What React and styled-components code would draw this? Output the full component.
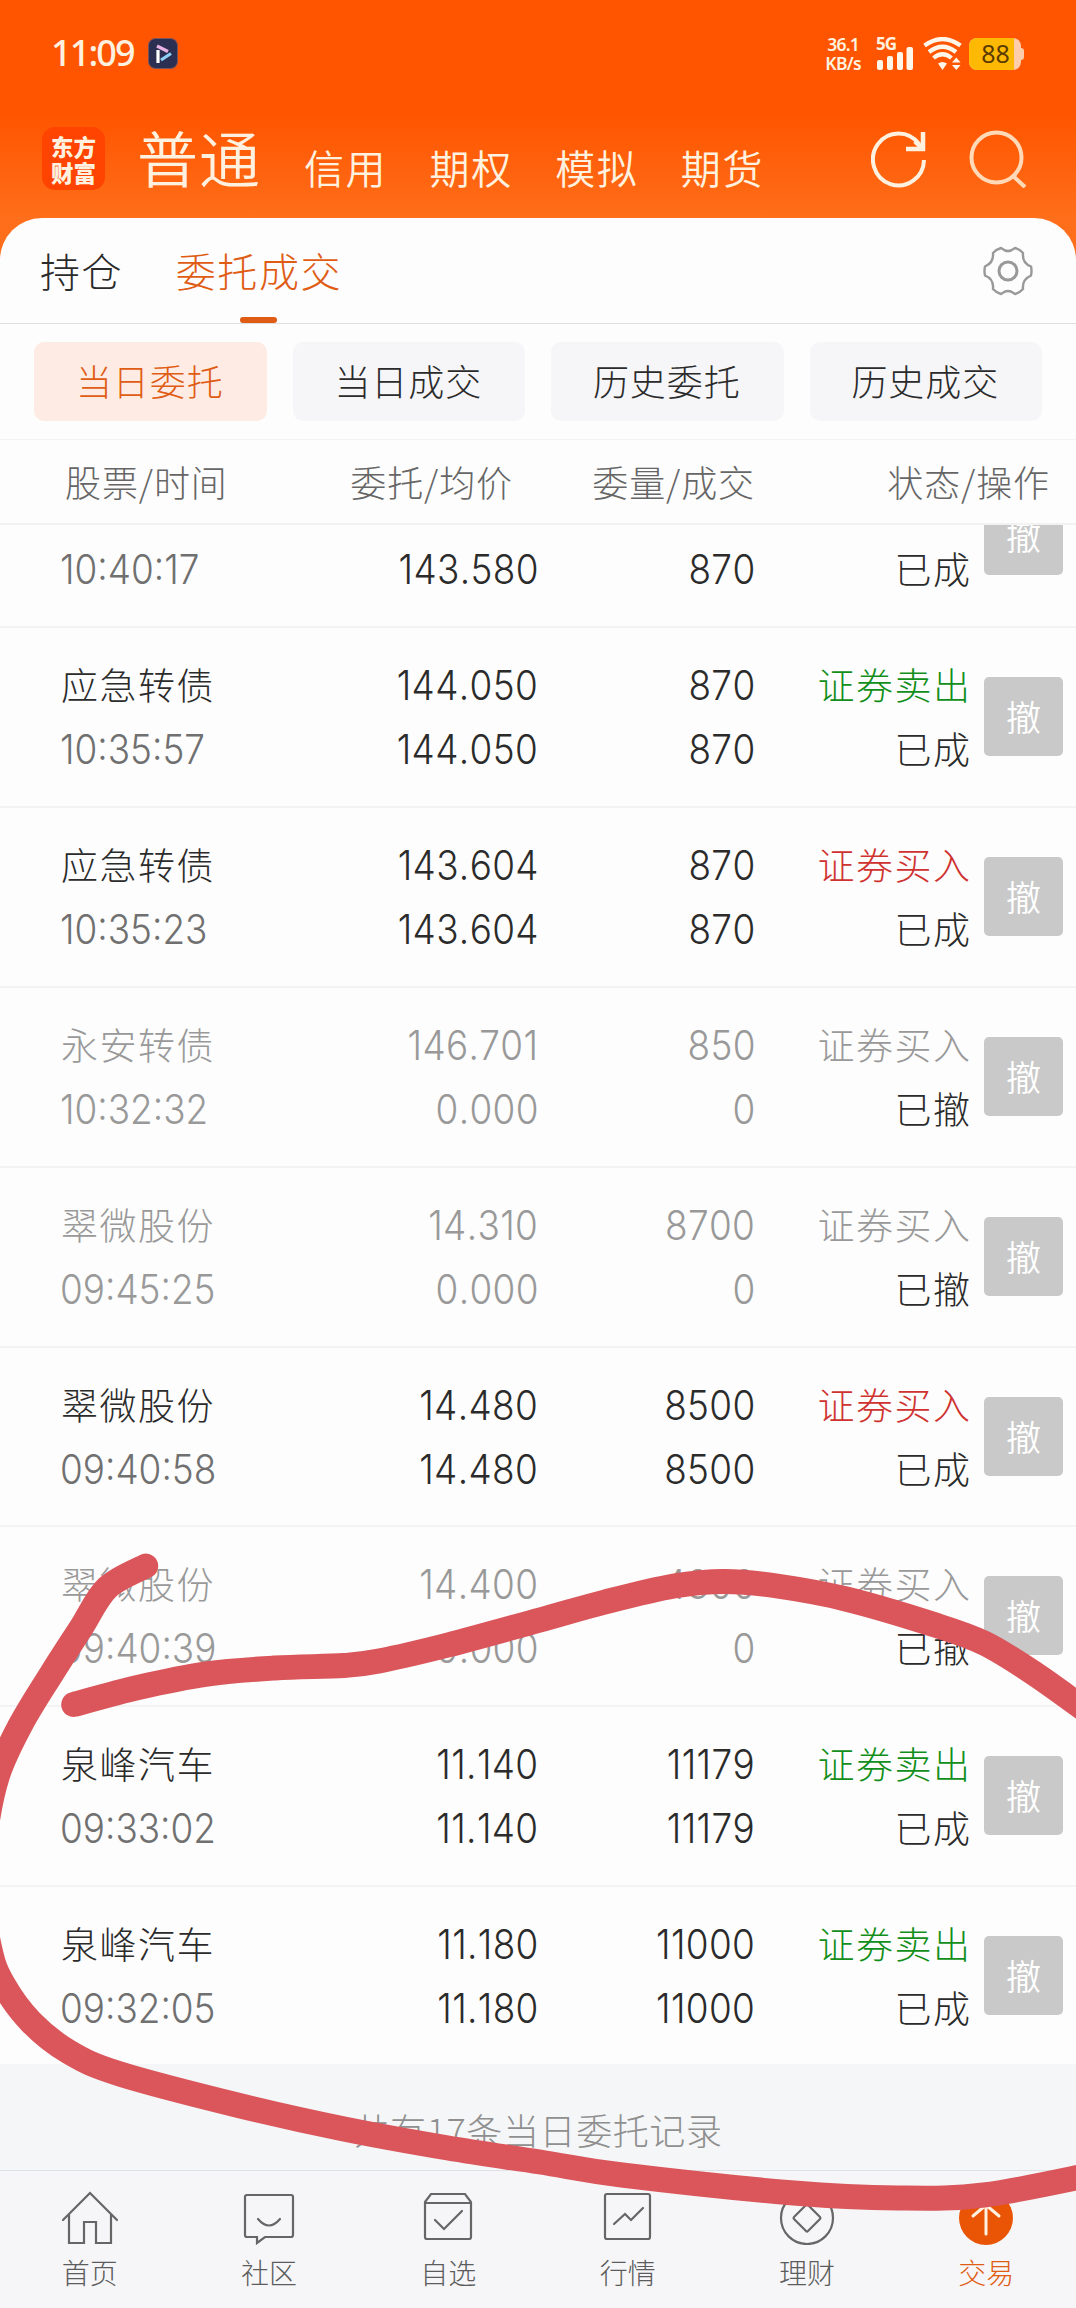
import styled, { createGlobalStyle } from 'styled-components';

// the first order is scrolled half way under the table head
const orders = [
  { time: '10:40:17', avg: '143.580', done: '870', partial: true },
  { name: '应急转债', time: '10:35:57', price: '144.050', avg: '144.050', qty: '870', done: '870', side: 'sell' },
  { name: '应急转债', time: '10:35:23', price: '143.604', avg: '143.604', qty: '870', done: '870', side: 'buy' },
  { name: '永安转债', time: '10:32:32', price: '146.701', avg: '0.000', qty: '850', done: '0', side: 'buy', off: true },
  { name: '翠微股份', time: '09:45:25', price: '14.310', avg: '0.000', qty: '8700', done: '0', side: 'buy', off: true },
  { name: '翠微股份', time: '09:40:58', price: '14.480', avg: '14.480', qty: '8500', done: '8500', side: 'buy' },
  { name: '翠微股份', time: '09:40:39', price: '14.400', avg: '0.000', qty: '4300', done: '0', side: 'buy', off: true },
  { name: '泉峰汽车', time: '09:33:02', price: '11.140', avg: '11.140', qty: '11179', done: '11179', side: 'sell' },
  { name: '泉峰汽车', time: '09:32:05', price: '11.180', avg: '11.180', qty: '11000', done: '11000', side: 'sell' },
];

const sides = { buy: '证券买入', sell: '证券卖出' };
const accounts = ['信用', '期权', '模拟', '期货'];
const filters = ['当日委托', '当日成交', '历史委托', '历史成交'];

// hand drawn marker strokes
const loopStroke = [
  [145.7, 1566], [107, 1588], [81, 1628], [52, 1673], [21, 1724], [-2, 1774], [-14, 1830],
  [-18, 1890], [-10, 1950], [3, 1984], [31, 2022], [69, 2052], [120, 2074], [241, 2106],
  [344, 2129], [448, 2148], [540, 2162], [622, 2175], [794, 2193], [898, 2198], [984, 2195], [1095, 2174],
];
const topStroke = [
  [73.7, 1704.5], [138, 1687.5], [207, 1674], [275, 1668], [344, 1665.5], [379, 1661], [448, 1645],
  [540, 1620], [605, 1602], [674, 1586], [725, 1581.500], [777, 1586], [846, 1599], [932, 1624],
  [984, 1643], [1035, 1674], [1095, 1717],
];

const smooth = (pts) => {
  let d = `M${pts[0]}`;
  for (let i = 0; i < pts.length - 1; i++) {
    const a = pts[i - 1] || pts[i];
    const b = pts[i];
    const c = pts[i + 1];
    const e = pts[i + 2] || c;
    d += `C${b[0] + (c[0] - a[0]) / 6} ${b[1] + (c[1] - a[1]) / 6} ${c[0] - (e[0] - b[0]) / 6} ${c[1] - (e[1] - b[1]) / 6} ${c[0]} ${c[1]}`;
  }
  return d;
};

function StatusBar() {
  return (
    <Status>
      <Clock>11:09</Clock>
      <svg width="30" height="31" viewBox="0 0 30 31">
        <rect x="0.5" y="0.5" width="29" height="30" rx="7" fill="#2b2f52" stroke="#7a5560" />
        <g fill="none" strokeWidth="3.2">
          <path d="M10 12v13" stroke="#fff" />
          <path d="M9 8l11 5.500" stroke="#e9b3e4" />
          <path d="M13 22l10-6.500" stroke="#8fd0f7" />
        </g>
      </svg>
      <Speed>
        <span>36.1</span>
        <span>KB/s</span>
      </Speed>
      <Signal>
        <b>5G</b>
        <svg width="38" height="23" viewBox="0 0 38 23" fill="#fff6ea">
          <rect x="1" y="13" width="6" height="10" rx="2" />
          <rect x="11" y="9" width="6" height="14" rx="2" />
          <rect x="21" y="5" width="6" height="18" rx="2" />
          <rect x="30.500" y="0" width="6.500" height="23" rx="2" />
        </svg>
      </Signal>
      <svg width="40" height="34" viewBox="0 0 40 34">
        <g fill="none" stroke="#fff6ea" strokeWidth="4.2">
          <path d="M1.500 8.500Q19.500-4.500 37.500 8.500" />
          <path d="M6 15Q19.500 4.500 33 15" />
          <path d="M10.500 21Q19.500 13.500 28.500 21" />
        </g>
        <path d="M15 26.500q4.500-3 9 0L19.500 33z" fill="#fff6ea" />
        <path d="M29 25.500l4.300-5 4.300 5zM29 28l4.300 5 4.300-5z" fill="#fff6ea" />
      </svg>
      <Battery>
        <Level>88</Level>
      </Battery>
    </Status>
  );
}

function Header() {
  return (
    <TopBar>
      <Logo>
        <span>东方</span>
        <span>财富</span>
      </Logo>
      <Current>普通</Current>
      <Accounts>
        {accounts.map((a) => (
          <span key={a}>{a}</span>
        ))}
      </Accounts>
      <Tools>
        <svg width="56" height="58" viewBox="0 0 56 58" fill="none" stroke="#fff1df" strokeWidth="4">
          <path d="M53 30A25.500 26 0 1 1 48 14" />
          <path d="M52 2v17H35" strokeWidth="4.500" />
          <path d="M44 11l7 7" strokeWidth="5" />
        </svg>
        <svg width="58" height="58" viewBox="0 0 58 58" fill="none" stroke="#ffd9b8" strokeWidth="4">
          <circle cx="27.500" cy="27.500" r="25" />
          <path d="M43 45l13 12" />
        </svg>
      </Tools>
    </TopBar>
  );
}

function Order({ order }) {
  const { off, side, partial } = order;
  return (
    <Row $partial={partial}>
      <Cell>
        {!partial && <Line $tone={off && 'off'}>{order.name}</Line>}
        <Time $tone={off ? 'off' : 'time'}>{order.time}</Time>
      </Cell>
      <Cell $end>
        {!partial && <Num $tone={off && 'off'}>{order.price}</Num>}
        <Num $tone={off && 'off'}>{order.avg}</Num>
      </Cell>
      <Cell $end>
        {!partial && <Num $tone={off && 'off'}>{order.qty}</Num>}
        <Num $tone={off && 'off'}>{order.done}</Num>
      </Cell>
      <Cell $end>
        {!partial && <Line $tone={off ? 'off' : side}>{sides[side]}</Line>}
        <Line>{off ? '已撤' : '已成'}</Line>
      </Cell>
      <Cancel $partial={partial}>撤</Cancel>
    </Row>
  );
}

function BottomNav() {
  return (
    <Nav>
      <NavItem>
        <svg width="56" height="54" viewBox="0 0 56 54">
          <path d="M1 29L28 2l27 27M7 23v29h15V31h12v21h15V23" />
        </svg>
        首页
      </NavItem>
      <NavItem>
        <svg width="56" height="54" viewBox="0 0 56 54">
          <path d="M6 4h44q2 0 2 2v38q0 2-2 2H24l-8 6v-6H6q-2 0-2-2V6q0-2 2-2zM17 28q11 13 22 0" />
        </svg>
        社区
      </NavItem>
      <NavItem>
        <svg width="56" height="54" viewBox="0 0 56 54">
          <path d="M5 11l6-8h34l6 8v35q0 2-2 2H7q-2 0-2-2zM5 12h46M15 29l9 9 18-18" />
        </svg>
        自选
      </NavItem>
      <NavItem>
        <svg width="56" height="54" viewBox="0 0 56 54">
          <rect x="5" y="3" width="45" height="45" rx="2" />
          <path d="M14 33l11-10 6 6 12-12" />
        </svg>
        行情
      </NavItem>
      <NavItem>
        <svg width="56" height="54" viewBox="0 0 56 54">
          <circle cx="28" cy="27" r="26" />
          <path d="M27 14q1-1 2 0l12 12q1 1 0 2L29 40q-1 1-2 0L15 28q-1-1 0-2z" />
        </svg>
        理财
      </NavItem>
      <NavItem $active>
        <svg width="56" height="54" viewBox="0 0 56 54">
          <circle cx="28" cy="27" r="27" fill="#e95504" stroke="none" />
          <path d="M28 43V16M15 25l13-11 13 11" stroke="#fff1df" strokeWidth="3" />
        </svg>
        交易
      </NavItem>
    </Nav>
  );
}

function App() {
  return (
    <Screen>
      <Global />
      <StatusBar />
      <Header />
      <Sheet>
        <Tabs>
          <Tab>持仓</Tab>
          <Tab $active>委托成交</Tab>
          <svg width="50" height="50" viewBox="0 0 50 50" fill="none" stroke="#999" strokeWidth="2.4">
            <path d="M18 2l4 2.500q3 1 6 0L32 2q5 1.500 8 5-1 10 8 13.500 1 4.500 0 9-9 4-8 13.500-3 3.500-8 5l-4-2.500q-3-1-6 0L18 48q-5-1.500-8-5 1-10-8-13.500-1-4.500 0-9 9-4 8-13.500 3-3.500 8-5z" />
            <circle cx="25" cy="25" r="9" strokeWidth="3" />
          </svg>
        </Tabs>
        <Filters>
          {filters.map((f, i) => (
            <Chip key={f} $active={i === 0}>{f}</Chip>
          ))}
        </Filters>
        <Heads>
          <span>股票/时间</span>
          <span>委托/均价</span>
          <span>委量/成交</span>
          <span>状态/操作</span>
        </Heads>
        <List>
          {orders.map((o) => (
            <Order key={o.time} order={o} />
          ))}
        </List>
      </Sheet>
      <Total>共有17条当日委托记录</Total>
      <BottomNav />
      <Marker viewBox="0 0 1076 2308">
        <path d={smooth(loopStroke)} />
        <path d={smooth(topStroke)} />
      </Marker>
    </Screen>
  );
}

export default App;

const Global = createGlobalStyle`
  * { box-sizing: border-box; }
  body { margin: 0; }
`;

const tones = {
  off: '#999',
  time: '#707070',
  buy: '#cf3330',
  sell: '#128f1a',
};

const Screen = styled.div`
  position: relative;
  width: 1076px;
  height: 2308px;
  overflow: hidden;
  display: flex;
  flex-direction: column;
  background: linear-gradient(#ff5500 0, #ff5500 115px, #ff6e1a 218px, #ff6e1a 300px, #f5f6f8 301px);
  font-family: "Noto Sans CJK SC", sans-serif;
  font-weight: 300;
  color: #2b2b2b;
  white-space: nowrap;
`;

const Status = styled.div`
  height: 107px;
  padding: 0 55px 0 51px;
  display: flex;
  align-items: center;
  color: #fff1df;
`;

const Clock = styled.div`
  width: 97px;
  margin-top: -3px;
  font-family: "Noto Sans", sans-serif;
  font-size: 36px;
  font-weight: 500;
  letter-spacing: -1.9px;
`;

const Speed = styled.div`
  margin-left: auto;
  margin-right: 15px;
  display: flex;
  flex-direction: column;
  align-items: center;
  font-family: "Noto Sans", sans-serif;
  font-size: 17.5px;
  font-weight: 600;
  line-height: 19px;
  letter-spacing: -0.7px;
`;

const Signal = styled.div`
  position: relative;
  display: flex;
  align-items: flex-end;
  height: 32px;
  margin-right: 9px;

  b {
    position: absolute;
    top: -4px;
    left: 0;
    font: 700 17px/20px "Noto Sans", sans-serif;
    letter-spacing: -1px;
  }
`;

const Battery = styled.div`
  width: 52px;
  height: 32px;
  margin-left: 6px;
  border-radius: 8px;
  background: #ffcdaa;
  position: relative;

  &::after {
    content: "";
    position: absolute;
    right: -3px;
    top: 10px;
    width: 4px;
    height: 12px;
    border-radius: 0 3px 3px 0;
    background: #ffcdaa;
  }
`;

const Level = styled.div`
  width: 45px;
  height: 32px;
  padding-left: 8px;
  border-radius: 8px 0 0 8px;
  background: #fdb904;
  color: #5a3a00;
  font: 400 25px/31px "Noto Sans", sans-serif;
  text-align: center;
`;

const TopBar = styled.div`
  height: 111px;
  padding: 0 49px 0 42px;
  display: flex;
  align-items: flex-start;
  color: #fff1df;
  font-weight: 350;
`;

const Logo = styled.div`
  width: 63px;
  height: 63px;
  margin-top: 20px;
  border-radius: 13px;
  background: #ff4300;
  display: flex;
  flex-direction: column;
  align-items: center;
  justify-content: center;
  font-size: 22.5px;
  font-weight: 900;
  line-height: 26px;
`;

const Current = styled.div`
  margin-left: 32px;
  font-size: 61px;
  line-height: 61px;
  margin-top: 19px;
  letter-spacing: 1px;
`;

const Accounts = styled.div`
  display: flex;
  gap: 42.4px;
  margin: 39px 0 0 43px;
  font-size: 40px;
  line-height: 42px;
  letter-spacing: 1.6px;
`;

const Tools = styled.div`
  margin: 23px 0 0 auto;
  display: flex;
  gap: 42px;
`;

const Sheet = styled.div`
  height: 1846px;
  border-radius: 42px 42px 0 0;
  background: #fdfdfd;
  display: flex;
  flex-direction: column;
  overflow: hidden;
`;

const Tabs = styled.div`
  height: 106px;
  flex: none;
  border-bottom: 1px solid #dedede;
  padding: 0 43px 0 40px;
  display: flex;
  align-items: center;
  gap: 52.5px;

  svg {
    margin-left: auto;
  }
`;

const Tab = styled.div`
  position: relative;
  height: 105px;
  font-size: 40px;
  letter-spacing: 1.6px;
  line-height: 105px;
  color: ${(p) => (p.$active ? '#e05c14' : '#2b2b2b')};

  &::after {
    content: "";
    display: ${(p) => (p.$active ? 'block' : 'none')};
    position: absolute;
    left: 50%;
    bottom: 0;
    width: 37px;
    height: 6px;
    margin-left: -19px;
    border-radius: 3px;
    background: #e05c14;
  }
`;

const Filters = styled.div`
  height: 116px;
  flex: none;
  padding: 18px 34px;
  border-bottom: 1px solid #f3f3f3;
  display: grid;
  grid-template-columns: repeat(4, 1fr);
  gap: 26px;
`;

const Chip = styled.div`
  height: 79px;
  padding-right: 1px;
  border-radius: 10px;
  background: ${(p) => (p.$active ? '#feece4' : '#f6f6f8')};
  color: ${(p) => (p.$active ? '#e05c14' : '#2b2b2b')};
  font-size: 36px;
  letter-spacing: 0.9px;
  line-height: 77px;
  text-align: center;
`;

const Heads = styled.div`
  height: 85px;
  flex: none;
  border-bottom: 2px solid #f2f2f2;
  padding: 0 26px 2px 65px;
  display: grid;
  grid-template-columns: 162px 286px 242px 1fr;
  align-items: center;
  text-align: right;
  color: #666;
  font-size: 36px;
  letter-spacing: 0.9px;
`;

const List = styled.div`
  flex: 1;
  min-height: 0;
  display: flex;
  flex-direction: column;
`;

const Row = styled.div`
  height: ${(p) => (p.$partial ? '101px' : '179.9px')};
  flex: none;
  overflow: hidden;
  border-top: ${(p) => (p.$partial ? 0 : '2px')} solid #f3f3f3;
  padding: ${(p) => (p.$partial ? '12px' : '25px')} 13px 0 61px;
  display: grid;
  grid-template-columns: 200px 277.5px 217px 216px 91.5px;
  align-items: start;
`;

const Cell = styled.div`
  display: flex;
  flex-direction: column;
  align-items: ${(p) => (p.$end ? 'flex-end' : 'flex-start')};
`;

const Line = styled.div`
  height: 64px;
  font-size: 37px;
  line-height: 62px;
  letter-spacing: 1.5px;
  color: ${(p) => tones[p.$tone] || '#2b2b2b'};
`;

const Num = styled(Line)`
  font-family: Inter, sans-serif;
  font-size: 41px;
  font-kerning: none;
  line-height: 64px;
  letter-spacing: 0.4px;
  transform: scaleX(0.9);
  transform-origin: right;
`;

const Time = styled(Num)`
  margin-left: -1px;
  letter-spacing: 0;
  transform-origin: left;
`;

const Cancel = styled.div`
  width: 79px;
  height: 79px;
  margin-top: ${(p) => (p.$partial ? '-41px' : '24px')};
  justify-self: end;
  border-radius: 5px;
  background: #c9c9c9;
  color: #fff;
  font-size: 35px;
  font-weight: 350;
  line-height: 77px;
  text-align: center;
`;

const Total = styled.div`
  height: 106px;
  background: #f5f6f8;
  color: #8f8f8f;
  font-size: 36px;
  letter-spacing: 0.6px;
  line-height: 130px;
  text-align: center;
`;

const Nav = styled.div`
  height: 138px;
  border-top: 1px solid #dfe1e4;
  background: #f6f6f8;
  display: grid;
  grid-template-columns: repeat(6, 1fr);
`;

const NavItem = styled.div`
  padding-top: 20px;
  display: flex;
  flex-direction: column;
  align-items: center;
  gap: 7px;
  font-size: 28px;
  line-height: 40px;
  color: ${(p) => (p.$active ? '#e05c14' : '#5c5c5c')};

  svg {
    fill: none;
    stroke: #666;
    stroke-width: 2.2;
    stroke-linecap: round;
  }
`;

const Marker = styled.svg`
  position: absolute;
  inset: 0;
  width: 1076px;
  height: 2308px;
  pointer-events: none;
  fill: none;
  stroke: #da565b;
  stroke-width: 25px;
  stroke-linecap: round;
  stroke-linejoin: round;
`;
